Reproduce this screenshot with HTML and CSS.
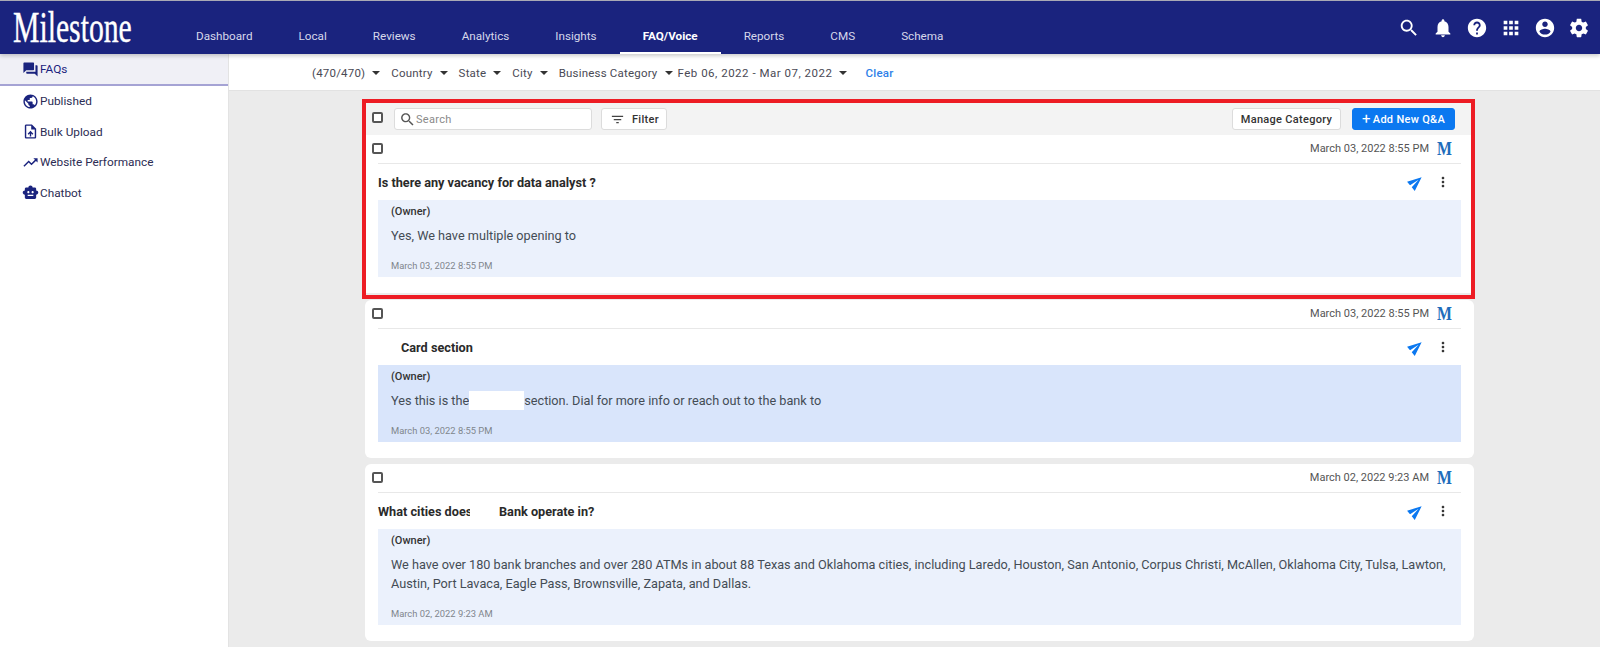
FILE: index.html
```html
<!DOCTYPE html>
<html lang="en">
<head>
    <meta charset="UTF-8">
    <meta name="viewport" content="width=device-width, initial-scale=1.0">
    <title>Milestone - FAQ/Voice</title>
    <link rel="stylesheet" href="styles.css">
</head>
<body>
    <header class="topbar">
        <div class="logo"><span class="logo-text">Milestone</span></div>
        <nav class="nav">
            <a>Dashboard</a>
            <a>Local</a>
            <a>Reviews</a>
            <a>Analytics</a>
            <a>Insights</a>
            <a class="active">FAQ/Voice</a>
            <a>Reports</a>
            <a>CMS</a>
            <a>Schema</a>
        </nav>
        <div class="top-icons">
            <svg viewBox="0 0 24 24"><path d="M15.5 14h-.79l-.28-.27C15.41 12.59 16 11.11 16 9.5 16 5.91 13.09 3 9.5 3S3 5.91 3 9.5 5.91 16 9.5 16c1.61 0 3.09-.59 4.23-1.57l.27.28v.79l5 4.99L20.49 19l-4.99-5zm-6 0C7.01 14 5 11.99 5 9.5S7.01 5 9.5 5 14 7.01 14 9.5 11.99 14 9.5 14z"/></svg>
            <svg viewBox="0 0 24 24"><path d="M12 22c1.1 0 2-.9 2-2h-4c0 1.1.9 2 2 2zm6-6v-5c0-3.07-1.63-5.64-4.5-6.32V4c0-.83-.67-1.5-1.5-1.5s-1.5.67-1.5 1.5v.68C7.64 5.36 6 7.92 6 11v5l-2 2v1h16v-1l-2-2z"/></svg>
            <svg viewBox="0 0 24 24"><path d="M12 2C6.48 2 2 6.48 2 12s4.48 10 10 10 10-4.48 10-10S17.52 2 12 2zm1 17h-2v-2h2v2zm2.07-7.75l-.9.92C13.45 12.9 13 13.5 13 15h-2v-.5c0-1.1.45-2.1 1.17-2.83l1.24-1.26c.37-.36.59-.86.59-1.41 0-1.1-.9-2-2-2s-2 .9-2 2H8c0-2.21 1.79-4 4-4s4 1.79 4 4c0 .88-.36 1.68-.93 2.25z"/></svg>
            <svg viewBox="0 0 24 24"><path d="M4 8h4V4H4v4zm6 12h4v-4h-4v4zm-6 0h4v-4H4v4zm0-6h4v-4H4v4zm6 0h4v-4h-4v4zm6-10v4h4V4h-4zm-6 4h4V4h-4v4zm6 6h4v-4h-4v4zm0 6h4v-4h-4v4z"/></svg>
            <svg viewBox="0 0 24 24"><path d="M12 2C6.48 2 2 6.48 2 12s4.48 10 10 10 10-4.48 10-10S17.52 2 12 2zm0 3c1.66 0 3 1.34 3 3s-1.34 3-3 3-3-1.34-3-3 1.34-3 3-3zm0 14.2c-2.5 0-4.71-1.28-6-3.22.03-1.99 4-3.08 6-3.08 1.99 0 5.97 1.09 6 3.08-1.29 1.94-3.5 3.22-6 3.22z"/></svg>
            <svg viewBox="0 0 24 24"><path d="M19.43 12.98c.04-.32.07-.64.07-.98s-.03-.66-.07-.98l2.11-1.65c.19-.15.24-.42.12-.64l-2-3.46c-.12-.22-.39-.3-.61-.22l-2.49 1c-.52-.4-1.08-.73-1.69-.98l-.38-2.65C14.46 2.18 14.25 2 14 2h-4c-.25 0-.46.18-.49.42l-.38 2.65c-.61.25-1.17.59-1.69.98l-2.49-1c-.23-.09-.49 0-.61.22l-2 3.46c-.13.22-.07.49.12.64l2.11 1.65c-.04.32-.07.65-.07.98s.03.66.07.98l-2.11 1.65c-.19.15-.24.42-.12.64l2 3.46c.12.22.39.3.61.22l2.49-1c.52.4 1.08.73 1.69.98l.38 2.65c.03.24.24.42.49.42h4c.25 0 .46-.18.49-.42l.38-2.65c.61-.25 1.17-.59 1.69-.98l2.49 1c.23.09.49 0 .61-.22l2-3.46c.12-.22.07-.49-.12-.64l-2.11-1.65zM12 15.5c-1.93 0-3.5-1.57-3.5-3.5s1.57-3.5 3.5-3.5 3.5 1.57 3.5 3.5-1.57 3.5-3.5 3.5z"/></svg>
        </div>
    </header>

    <div class="layout">
        <aside class="sidebar">
            <a class="side-item active">
                <svg viewBox="0 0 24 24"><path d="M21 6h-2v9H6v2c0 .55.45 1 1 1h11l4 4V7c0-.55-.45-1-1-1zm-4 6V3c0-.55-.45-1-1-1H3c-.55 0-1 .45-1 1v14l4-4h10c.55 0 1-.45 1-1z"/></svg>
                FAQs
            </a>
            <a class="side-item">
                <svg viewBox="0 0 24 24"><path d="M12 2C6.48 2 2 6.48 2 12s4.48 10 10 10 10-4.48 10-10S17.52 2 12 2zm-1 17.93c-3.95-.49-7-3.85-7-7.93 0-.62.08-1.21.21-1.79L9 15v1c0 1.1.9 2 2 2v1.93zm6.9-2.54c-.26-.81-1-1.39-1.9-1.39h-1v-3c0-.55-.45-1-1-1H8v-2h2c.55 0 1-.45 1-1V7h2c1.1 0 2-.9 2-2v-.41c2.93 1.19 5 4.06 5 7.41 0 2.08-.8 3.97-2.1 5.39z"/></svg>
                Published
            </a>
            <a class="side-item">
                <svg viewBox="0 0 24 24"><path d="M14 2H6c-1.1 0-2 .9-2 2v16c0 1.1.9 2 2 2h12c1.1 0 2-.9 2-2V8l-6-6zm4 18H6V4h7v5h5v11zM8 15.01l1.41 1.41L11 14.84V19h2v-4.16l1.59 1.59L16 15.01 12.01 11z"/></svg>
                Bulk Upload
            </a>
            <a class="side-item">
                <svg viewBox="0 0 24 24"><path d="M16 6l2.29 2.29-4.88 4.88-4-4L2 16.59 3.41 18l6-6 4 4 6.3-6.29L22 12V6z"/></svg>
                Website Performance
            </a>
            <a class="side-item">
                <svg viewBox="0 0 24 24"><path d="M20 9V7c0-1.1-.9-2-2-2h-3c0-1.66-1.34-3-3-3S9 3.34 9 5H6c-1.1 0-2 .9-2 2v2c-1.66 0-3 1.34-3 3s1.34 3 3 3v4c0 1.1.9 2 2 2h12c1.1 0 2-.9 2-2v-4c1.66 0 3-1.34 3-3s-1.34-3-3-3zM7.5 11.5C7.5 10.67 8.17 10 9 10s1.5.67 1.5 1.5S9.83 13 9 13s-1.5-.67-1.5-1.5zM16 17H8v-2h8v2zm-1-4c-.83 0-1.5-.67-1.5-1.5S14.17 10 15 10s1.5.67 1.5 1.5S15.83 13 15 13z"/></svg>
                Chatbot
            </a>
        </aside>

        <main class="main">
            <div class="filters">
                <span class="filter">(470/470)</span>
                <span class="filter">Country</span>
                <span class="filter">State</span>
                <span class="filter">City</span>
                <span class="filter filter-cat">Business Category</span>
                <span class="filter filter-date">Feb 06, 2022 - Mar 07, 2022</span>
                <a class="clear">Clear</a>
            </div>

            <div class="content">
                <div class="highlight">
                    <div class="toolbar">
                        <span class="check"></span>
                        <div class="search">
                            <svg viewBox="0 0 24 24"><path d="M15.5 14h-.79l-.28-.27C15.41 12.59 16 11.11 16 9.5 16 5.91 13.09 3 9.5 3S3 5.91 3 9.5 5.91 16 9.5 16c1.61 0 3.09-.59 4.23-1.57l.27.28v.79l5 4.99L20.49 19l-4.99-5zm-6 0C7.01 14 5 11.99 5 9.5S7.01 5 9.5 5 14 7.01 14 9.5 11.99 14 9.5 14z"/></svg>
                            Search
                        </div>
                        <button class="btn btn-filter">
                            <svg viewBox="0 0 24 24"><path d="M10 18h4v-2h-4v2zM3 6v2h18V6H3zm3 7h12v-2H6v2z"/></svg>
                            Filter
                        </button>
                        <button class="btn btn-manage">Manage Category</button>
                        <button class="btn btn-add"><span class="plus">+</span>Add New Q&amp;A</button>
                    </div>

                    <article class="card card-first">
                        <div class="card-head">
                            <span class="check"></span>
                            <span class="stamp">March 03, 2022 8:55 PM</span>
                            <span class="brand-m">M</span>
                        </div>
                        <div class="card-title">
                            <h3>Is there any vacancy for data analyst ?</h3>
                            <svg class="send" viewBox="0 0 24 24"><path d="M2.01 21L23 12 2.01 3 2 10l15 2-15 2z"/></svg>
                            <svg class="more" viewBox="0 0 24 24"><path d="M12 8c1.1 0 2-.9 2-2s-.9-2-2-2-2 .9-2 2 .9 2 2 2zm0 2c-1.1 0-2 .9-2 2s.9 2 2 2 2-.9 2-2-.9-2-2-2zm0 6c-1.1 0-2 .9-2 2s.9 2 2 2 2-.9 2-2-.9-2-2-2z"/></svg>
                        </div>
                        <div class="answer">
                            <div class="owner">(Owner)</div>
                            <p>Yes, We have multiple opening to</p>
                            <div class="answer-date">March 03, 2022 8:55 PM</div>
                        </div>
                    </article>
                </div>

                <article class="card">
                    <div class="card-head">
                        <span class="check"></span>
                        <span class="stamp">March 03, 2022 8:55 PM</span>
                        <span class="brand-m">M</span>
                    </div>
                    <div class="card-title">
                        <h3 class="indent">Card section</h3>
                        <svg class="send" viewBox="0 0 24 24"><path d="M2.01 21L23 12 2.01 3 2 10l15 2-15 2z"/></svg>
                        <svg class="more" viewBox="0 0 24 24"><path d="M12 8c1.1 0 2-.9 2-2s-.9-2-2-2-2 .9-2 2 .9 2 2 2zm0 2c-1.1 0-2 .9-2 2s.9 2 2 2 2-.9 2-2-.9-2-2-2zm0 6c-1.1 0-2 .9-2 2s.9 2 2 2 2-.9 2-2-.9-2-2-2z"/></svg>
                    </div>
                    <div class="answer answer-dark">
                        <div class="owner">(Owner)</div>
                        <p>Yes this is the<span class="blank"></span>section. Dial for more info or reach out to the bank to</p>
                        <div class="answer-date">March 03, 2022 8:55 PM</div>
                    </div>
                </article>

                <article class="card">
                    <div class="card-head">
                        <span class="check"></span>
                        <span class="stamp">March 02, 2022 9:23 AM</span>
                        <span class="brand-m">M</span>
                    </div>
                    <div class="card-title">
                        <h3><span class="patched">What cities does</span>Bank operate in?</h3>
                        <svg class="send" viewBox="0 0 24 24"><path d="M2.01 21L23 12 2.01 3 2 10l15 2-15 2z"/></svg>
                        <svg class="more" viewBox="0 0 24 24"><path d="M12 8c1.1 0 2-.9 2-2s-.9-2-2-2-2 .9-2 2 .9 2 2 2zm0 2c-1.1 0-2 .9-2 2s.9 2 2 2 2-.9 2-2-.9-2-2-2zm0 6c-1.1 0-2 .9-2 2s.9 2 2 2 2-.9 2-2-.9-2-2-2z"/></svg>
                    </div>
                    <div class="answer">
                        <div class="owner">(Owner)</div>
                        <p>We have over 180 bank branches and over 280 ATMs in about 88 Texas and Oklahoma cities, including Laredo, Houston, San Antonio, Corpus Christi, McAllen, Oklahoma City, Tulsa, Lawton, Austin, Port Lavaca, Eagle Pass, Brownsville, Zapata, and Dallas.</p>
                        <div class="answer-date">March 02, 2022 9:23 AM</div>
                    </div>
                </article>
            </div>
        </main>
    </div>
</body>
</html>
```

FILE: styles.css
```css
* {
    box-sizing: border-box;
}
html, body {
    height: 100%;
}
body {
    margin: 0;
    font-family: Roboto, "Liberation Sans", sans-serif;
    color: #333;
    background-color: #ebebeb;
    overflow: hidden;
}

/* top bar */
.topbar {
    display: flex;
    height: 54px;
    background-color: #1a237e;
    border-top: 1px solid #a9a9b5;
    position: relative;
    z-index: 2;
    box-shadow: 0 2px 4px rgba(0,0,0,0.2);
}
.logo {
    flex: 0 0 173px;
    padding-left: 13px;
}
.logo-text {
    display: inline-block;
    width: 150px;
    font-family: "Liberation Serif", serif;
    font-size: 45px;
    line-height: 53px;
    color: white;
    -webkit-text-stroke: 0.4px white;
    transform: scaleX(0.66);
    transform-origin: left center;
}
.nav {
    display: flex;
}
.nav a {
    padding: 0 23px;
    font-size: 11.7px;
    line-height: 71px;
    height: 53px;
    color: #d6d8ea;
}
.nav a.active {
    color: white;
    font-weight: 700;
    border-bottom: 2px solid white;
}
.top-icons {
    margin-left: auto;
    display: flex;
    align-items: center;
    gap: 12px;
    padding-right: 10px;
}
.top-icons svg {
    width: 22px;
    height: 22px;
    fill: white;
}

/* sidebar */
.layout {
    display: flex;
    height: 593px;
}
.sidebar {
    flex: 0 0 229px;
    background-color: white;
    border-right: 1px solid #e3e3e3;
}
.side-item {
    display: flex;
    align-items: center;
    gap: 1px;
    height: 30.5px;
    padding-left: 22px;
    font-size: 11.8px;
    color: #2c2c54;
}
.side-item svg {
    width: 17px;
    height: 17px;
    fill: #1a237e;
}
.side-item.active {
    height: 32px;
    color: #1a237e;
    background-color: #f0f0f6;
    border-bottom: 2px solid #a5a3d4;
}

/* filter row */
.main {
    flex: 1;
    min-width: 0;
}
.filters {
    display: flex;
    align-items: center;
    height: 37px;
    padding-left: 83px;
    padding-top: 1px;
    background-color: white;
    border-bottom: 1px solid #e2e2e2;
}
.filter {
    display: flex;
    align-items: center;
    margin-right: 11px;
    font-size: 11.5px;
    letter-spacing: 0.2px;
    color: #4a4a55;
}
.filter::after {
    content: "";
    margin-left: 7px;
    border-left: 4px solid transparent;
    border-right: 4px solid transparent;
    border-top: 4px solid #333;
}
.filter-cat {
    margin-right: 5px;
}
.filter-date {
    letter-spacing: 0.5px;
}
.clear {
    margin-left: 7px;
    font-size: 11.5px;
    font-weight: 500;
    letter-spacing: 0.3px;
    color: #2f7fe8;
}

/* cards */
.content {
    width: 1109px;
    margin-left: 136px;
    padding-top: 12px;
}
.highlight {
    position: relative;
    margin: 0 3px 7px 1px;
}
.highlight::after {
    content: "";
    position: absolute;
    top: -4px;
    left: -4px;
    right: -4px;
    bottom: -6px;
    border: 4px solid #ed1c24;
}
.toolbar {
    display: flex;
    align-items: center;
    height: 32px;
    padding: 0 16px 0 6px;
    background-color: #f3f3f3;
}
.check {
    flex: none;
    width: 11px;
    height: 11px;
    border: 2px solid #555;
    border-radius: 2px;
    background-color: white;
}
.toolbar .check {
    margin-top: -3px;
}
.search {
    display: flex;
    align-items: center;
    width: 198px;
    height: 22px;
    margin-left: 11px;
    padding-left: 4px;
    font-size: 11px;
    letter-spacing: 0.3px;
    color: #8a8a8a;
    background-color: white;
    border: 1px solid #dcdcdc;
    border-radius: 3px;
}
.search svg {
    width: 17px;
    height: 17px;
    fill: #555;
}
.btn {
    display: flex;
    align-items: center;
    height: 22px;
    padding: 0;
    font-family: inherit;
    font-size: 11px;
    font-weight: 500;
    letter-spacing: 0.3px;
    color: #333;
    background-color: white;
    border: 1px solid #dcdcdc;
    border-radius: 3px;
}
.btn-filter {
    width: 66px;
    margin-left: 9px;
    padding-left: 8px;
}
.btn-filter svg {
    width: 15px;
    height: 15px;
    fill: #444;
    margin-right: 7px;
}
.btn-manage {
    width: 109px;
    margin-left: auto;
    justify-content: center;
}
.btn-add {
    width: 103px;
    margin-left: 11px;
    justify-content: center;
    color: white;
    background-color: #0b78f0;
    border-color: #0b78f0;
}
.plus {
    font-size: 15px;
    font-weight: 400;
    margin-right: 2px;
}
.card {
    padding: 0 13px 16px;
    background-color: white;
    border-radius: 6px;
}
.card + .card {
    margin-top: 6px;
}
.card-first {
    padding: 0 10px 16px 12px;
    border-radius: 0;
}
.card-head {
    display: flex;
    align-items: center;
    height: 29px;
    padding-bottom: 2px;
    border-bottom: 1px solid #e8e8e8;
}
.card .card-head .check {
    margin-left: -6px;
}
.stamp {
    margin-left: auto;
    margin-right: 8px;
    font-size: 11px;
    color: #555;
}
.brand-m {
    display: inline-block;
    width: 24px;
    padding-top: 2px;
    font-family: "Liberation Serif", serif;
    font-size: 18px;
    line-height: 18px;
    font-weight: 700;
    color: #1f6dbb;
    transform: scaleX(0.88);
    transform-origin: left center;
}
.card-title {
    display: flex;
    align-items: center;
    height: 36px;
}
.card-title h3 {
    margin: 0 auto 0 0;
    font-size: 12.7px;
    font-weight: 700;
    color: #2a2a2a;
    white-space: nowrap;
}
.card-title h3.indent {
    padding-left: 23px;
}
/* the white patch hides part of the name, as on the original */
.patched {
    display: inline-block;
    position: relative;
    width: 121px;
}
.patched::after {
    content: "";
    position: absolute;
    top: 0;
    bottom: 0;
    left: 92px;
    right: 0;
    background-color: white;
}
.send {
    width: 16px;
    height: 16px;
    fill: #0b78f0;
    transform: rotate(-40deg);
}
.more {
    width: 16px;
    height: 16px;
    fill: #333;
    margin-left: 11px;
    margin-right: 10px;
}
.answer {
    padding: 4px 13px;
    background-color: #ebf1fc;
}
.answer-dark {
    background-color: #d9e5fb;
}
.owner {
    font-size: 11px;
    line-height: 16px;
    font-weight: 500;
    color: #333;
}
.answer p {
    margin: 6px 0 14px;
    font-size: 12.7px;
    line-height: 19px;
    color: #444c55;
}
.blank {
    display: inline-block;
    vertical-align: top;
    width: 55px;
    height: 19px;
    background-color: white;
}
.answer-date {
    font-size: 9.4px;
    line-height: 14px;
    color: #80858c;
}
```
